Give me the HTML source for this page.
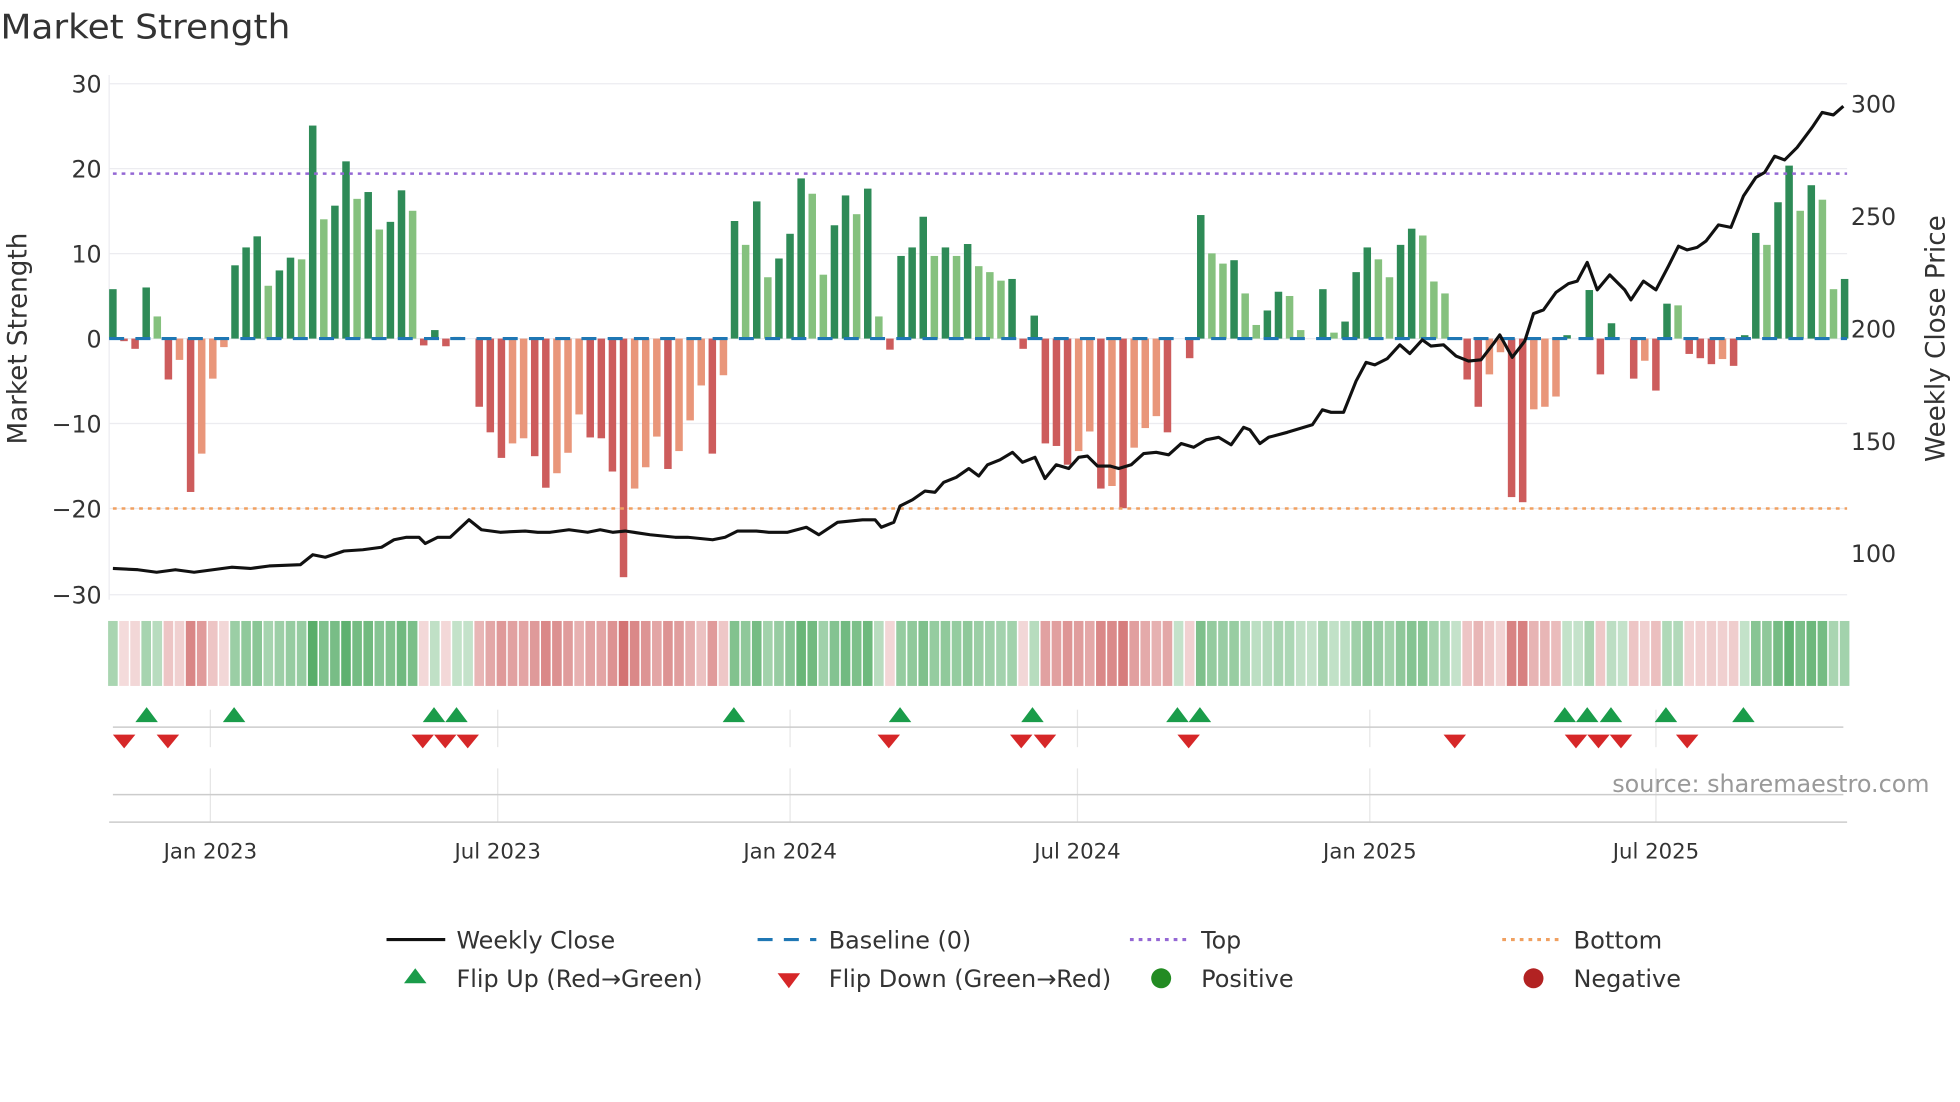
<!DOCTYPE html>
<html><head><meta charset="utf-8"><style>
html,body{margin:0;padding:0;background:#fff;}
svg{display:block;font-family:"DejaVu Sans","Liberation Sans",sans-serif;}
</style></head><body>
<svg id="s" width="1960" height="1102" viewBox="0 0 1568 882" xmlns="http://www.w3.org/2000/svg">
<rect width="1568" height="882" fill="#fff"/>
<text x="0" y="31" font-size="27" fill="#333" textLength="232" lengthAdjust="spacingAndGlyphs">Market Strength</text>
<g stroke="#ececf0" stroke-width="1">
<line x1="87" y1="67" x2="1478" y2="67"/><line x1="87" y1="135" x2="1478" y2="135"/><line x1="87" y1="203" x2="1478" y2="203"/><line x1="87" y1="271" x2="1478" y2="271"/><line x1="87" y1="339" x2="1478" y2="339"/><line x1="87" y1="407" x2="1478" y2="407"/><line x1="87" y1="476" x2="1478" y2="476"/>
<line x1="87" y1="60" x2="87" y2="480"/>
</g>
<g font-size="19" fill="#333" text-anchor="end">
<text x="81" y="74">30</text><text x="81" y="142">20</text><text x="81" y="210">10</text><text x="81" y="278">0</text><text x="81" y="346">−10</text><text x="81" y="414">−20</text><text x="81" y="483">−30</text>
</g>
<g font-size="19" fill="#333">
<text x="1481" y="90">300</text><text x="1481" y="180">250</text><text x="1481" y="270">200</text><text x="1481" y="360">150</text><text x="1481" y="450">100</text>
</g>
<text transform="translate(21,271) rotate(-90)" font-size="21" fill="#333" text-anchor="middle">Market Strength</text>
<text transform="translate(1556,271) rotate(-90)" font-size="21" fill="#333" text-anchor="middle">Weekly Close Price</text>
<g id="bars"></g>
<line x1="87" y1="271" x2="1478" y2="271" stroke="#1f77b4" stroke-width="2.5" stroke-dasharray="12,9"/>
<line x1="90" y1="139" x2="1478" y2="139" stroke="#9467d4" stroke-width="2" stroke-dasharray="3,4"/>
<line x1="90" y1="407" x2="1478" y2="407" stroke="#f0a060" stroke-width="2" stroke-dasharray="3,4"/>
<polyline id="price" fill="none" stroke="#111" stroke-width="2.5" stroke-linejoin="round" points="90,455 110,456 125,458 140,456 155,458 170,456 185,454 200,455 215,453 240,452 250,444 260,446 275,441 290,440 305,438 315,432 325,430 335,430 340,435 350,430 360,430 375,416 385,424 400,426 420,425 430,426 440,426 455,424 470,426 480,424 490,426 500,425 520,428 540,430 550,430 560,431 570,432 580,430 590,425 605,425 615,426 630,426 645,422 655,428 670,418 690,416 700,416 705,422 715,418 720,405 730,400 740,393 748,394 755,386 765,382 775,375 783,381 790,372 800,368 810,362 818,370 828,366 836,383 845,372 855,375 863,366 870,365 878,373 888,373 895,375 905,372 915,363 925,362 935,364 945,355 955,358 965,352 975,350 985,356 995,342 1000,344 1008,355 1015,350 1030,346 1050,340 1058,328 1065,330 1075,330 1085,305 1093,290 1100,292 1110,287 1120,276 1128,283 1138,272 1145,277 1155,276 1165,285 1175,289 1185,288 1195,275 1200,268 1210,286 1220,273 1227,251 1235,248 1245,234 1255,227 1262,225 1270,210 1278,232 1288,220 1300,232 1305,240 1315,225 1325,232 1335,213 1343,197 1350,200 1358,198 1365,193 1375,180 1385,182 1395,157 1405,142 1412,138 1420,125 1428,128 1438,118 1450,102 1458,90 1467,92 1475,85"/>
<g id="heat"></g>
<g stroke="#e6e6e6" stroke-width="1">
<line x1="168" y1="568" x2="168" y2="598"/><line x1="398" y1="568" x2="398" y2="598"/><line x1="632" y1="568" x2="632" y2="598"/><line x1="862" y1="568" x2="862" y2="598"/><line x1="1096" y1="568" x2="1096" y2="598"/><line x1="1325" y1="568" x2="1325" y2="598"/>
<line x1="168" y1="615" x2="168" y2="658"/><line x1="398" y1="615" x2="398" y2="658"/><line x1="632" y1="615" x2="632" y2="658"/><line x1="862" y1="615" x2="862" y2="658"/><line x1="1096" y1="615" x2="1096" y2="658"/><line x1="1325" y1="615" x2="1325" y2="658"/>
</g>
<line x1="90" y1="582" x2="1475" y2="582" stroke="#ccc" stroke-width="1.2"/>
<line x1="90" y1="636" x2="1475" y2="636" stroke="#ccc" stroke-width="1.2"/>
<line x1="87" y1="658" x2="1478" y2="658" stroke="#ccc" stroke-width="1.2"/>
<g id="marks"></g>
<text x="1290" y="634" font-size="19" fill="#999" textLength="254" lengthAdjust="spacingAndGlyphs">source: sharemaestro.com</text>
<g font-size="17" fill="#333" text-anchor="middle">
<text x="168" y="687">Jan 2023</text><text x="398" y="687">Jul 2023</text><text x="632" y="687">Jan 2024</text><text x="862" y="687">Jul 2024</text><text x="1096" y="687">Jan 2025</text><text x="1325" y="687">Jul 2025</text>
</g>
<g font-size="19" fill="#333">
<line x1="309" y1="752" x2="356" y2="752" stroke="#111" stroke-width="2.5"/>
<text x="365" y="759" textLength="127" lengthAdjust="spacingAndGlyphs">Weekly Close</text>
<line x1="606" y1="752" x2="653" y2="752" stroke="#1f77b4" stroke-width="2.5" stroke-dasharray="12,9"/>
<text x="663" y="759" textLength="114" lengthAdjust="spacingAndGlyphs">Baseline (0)</text>
<line x1="904" y1="752" x2="951" y2="752" stroke="#9467d4" stroke-width="2.5" stroke-dasharray="3,4"/>
<text x="961" y="759" textLength="32" lengthAdjust="spacingAndGlyphs">Top</text>
<line x1="1202" y1="752" x2="1249" y2="752" stroke="#f0a060" stroke-width="2.5" stroke-dasharray="3,4"/>
<text x="1259" y="759" textLength="71" lengthAdjust="spacingAndGlyphs">Bottom</text>
<path d="M332,775 L341,787 L323,787Z" fill="#1a9c4a"/>
<text x="365" y="790" textLength="197" lengthAdjust="spacingAndGlyphs">Flip Up (Red→Green)</text>
<path d="M622,779 L640,779 L631,791Z" fill="#d62728"/>
<text x="663" y="790" textLength="226" lengthAdjust="spacingAndGlyphs">Flip Down (Green→Red)</text>
<circle cx="929" cy="783" r="8" fill="#228b22"/>
<text x="961" y="790" textLength="74" lengthAdjust="spacingAndGlyphs">Positive</text>
<circle cx="1227" cy="783" r="8" fill="#b22222"/>
<text x="1259" y="790" textLength="86" lengthAdjust="spacingAndGlyphs">Negative</text>
</g>
</svg>
<script>
var V=[[5.8,1],[-0.3,1],[-1.2,1],[6,1],[2.6,0],[-4.8,1],[-2.5,0],[-18,1],[-13.5,0],[-4.7,0],[-1,0],[8.6,1],[10.7,1],[12,1],[6.2,0],[8,1],[9.5,1],[9.3,0],[25,1],[14,0],[15.6,1],[20.8,1],[16.4,0],[17.2,1],[12.8,0],[13.7,1],[17.4,1],[15,0],[-0.8,1],[1,1],[-0.9,1],[0.2,0],[0,0],[-8,1],[-11,1],[-14,1],[-12.3,0],[-11.7,0],[-13.8,1],[-17.5,1],[-15.8,0],[-13.4,0],[-8.9,0],[-11.6,1],[-11.7,1],[-15.6,1],[-28,1],[-17.6,0],[-15.1,0],[-11.5,0],[-15.3,1],[-13.2,0],[-9.6,0],[-5.5,0],[-13.5,1],[-4.3,0],[13.8,1],[11,0],[16.1,1],[7.2,0],[9.4,1],[12.3,1],[18.8,1],[17,0],[7.5,0],[13.3,1],[16.8,1],[14.6,0],[17.6,1],[2.6,0],[-1.3,1],[9.7,1],[10.7,1],[14.3,1],[9.7,0],[10.7,1],[9.7,0],[11.1,1],[8.5,0],[7.8,0],[6.8,0],[7,1],[-1.2,1],[2.7,1],[-12.3,1],[-12.6,1],[-14.8,1],[-13.2,0],[-10.9,0],[-17.6,1],[-17.3,0],[-19.9,1],[-12.8,0],[-10.5,0],[-9.1,0],[-11,1],[0,0],[-2.3,1],[14.5,1],[10,0],[8.8,0],[9.2,1],[5.3,0],[1.6,0],[3.3,1],[5.5,1],[5,0],[1,0],[0,0],[5.8,1],[0.7,0],[2,1],[7.8,1],[10.7,1],[9.3,0],[7.2,0],[11,1],[12.9,1],[12.1,0],[6.7,0],[5.3,0],[0,0],[-4.8,1],[-8,1],[-4.2,0],[-1.6,0],[-18.6,1],[-19.2,1],[-8.3,0],[-8,0],[-6.8,0],[0.4,1],[0,0],[5.7,1],[-4.2,1],[1.8,1],[0,0],[-4.7,1],[-2.6,0],[-6.1,1],[4.1,1],[3.9,0],[-1.8,1],[-2.3,1],[-3,1],[-2.4,0],[-3.2,1],[0.4,1],[12.4,1],[11,0],[16,1],[20.3,1],[15,0],[18,1],[16.3,0],[5.8,0],[7,1]];
var NS="http://www.w3.org/2000/svg",n=V.length,x0=90,x1=1476,dx=(x1-x0)/(n-1);
function el(t,a,p){var e=document.createElementNS(NS,t);for(var k in a)e.setAttribute(k,a[k]);p.appendChild(e);}
var B=document.getElementById('bars'),H=document.getElementById('heat'),M=document.getElementById('marks');
for(var i=0;i<n;i++){var v=V[i][0],d=V[i][1],x=x0+i*dx,h=Math.abs(v)*6.82;
 var c=v>=0?(d?'#2e8b57':'#85c17e'):(d?'#cd5c5c':'#e9967a');
 if(h>0.3)el('rect',{x:x-3,y:v>=0?271-h:271,width:6,height:h,fill:c},B);
 var a=Math.min(Math.abs(v)/22,1),col=v>=0?'rgba(60,160,80,'+(0.3+0.55*a)+')':'rgba(200,80,80,'+(0.2+0.6*a)+')';
 el('rect',{x:x-dx/2+0.6,y:497,width:dx-1.2,height:52,fill:col},H);}
[117,187,347,365,587,720,826,942,960,1252,1270,1289,1333,1395].forEach(function(x){el('path',{d:'M'+x+',566 L'+(x+9)+',578 L'+(x-9)+',578Z',fill:'#1a9c4a'},M);});
[99,134,338,356,374,711,817,836,951,1164,1261,1279,1297,1350].forEach(function(x){el('path',{d:'M'+(x-9)+',588 L'+(x+9)+',588 L'+x+',599Z',fill:'#d62728'},M);});
</script>
</body></html>
